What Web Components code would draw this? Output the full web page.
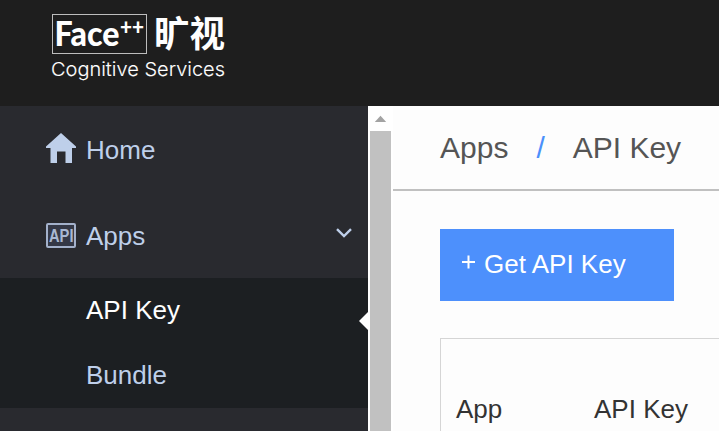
<!DOCTYPE html>
<html lang="en"><head><meta charset="utf-8"><title>Face++ Console</title>
<style>html,body{margin:0;height:100%;overflow:hidden;font-family:"Liberation Sans",Arial,sans-serif;background:#fdfdfd}</style></head>
<body><console-app></console-app>
<script>
const define=(name,html)=>customElements.define(name,class extends HTMLElement{
  constructor(){super();const t=document.createElement('template');t.innerHTML=html;
    this.attachShadow({mode:'open'}).append(t.content.cloneNode(true));}
});
define('brand-logo',`<style>:host{display:block;height:106px;background:#1e1e1e}svg{display:block}</style>
<svg width="240" height="106" fill="#fff">
<rect x="52.5" y="14.5" width="94" height="39" fill="none" stroke="#bdbdbd"/>
<text x="54.5" y="46" font-family="Lato, sans-serif" font-weight="900" font-size="34" textLength="65" lengthAdjust="spacingAndGlyphs">Face</text>
<text x="120" y="34.6" font-family="Lato, sans-serif" font-weight="900" font-size="22" textLength="24" lengthAdjust="spacingAndGlyphs">++</text>
<text x="154" y="47" font-family="Noto Sans CJK SC, sans-serif" font-weight="700" font-size="36" textLength="71" lengthAdjust="spacingAndGlyphs">旷视</text>
<text x="51" y="76" font-family="Inter, sans-serif" font-weight="300" font-size="19" stroke="#fff" stroke-width=".1" textLength="174" lengthAdjust="spacingAndGlyphs">Cognitive Services</text>
</svg>`);
define('home-icon',`<style>:host,svg{display:block}</style><svg width="30" height="32" fill="#becfea"><path d="M15 1 L30 14.5 V16 H26 V31 H19.5 V19.5 H11 V31 H4.5 V16 H0 V14.5Z"/></svg>`);
define('api-icon',`<style>:host,svg{display:block;overflow:visible}</style><svg width="30" height="26"><rect x="1" y="1" width="28" height="23" rx="1" fill="#343846" stroke="#a3b1cb" stroke-width="2"/><text x="3" y="18.7" fill="#a9b8d3" font-family="Liberation Sans, sans-serif" font-weight="700" font-size="17.5" textLength="24.5" lengthAdjust="spacingAndGlyphs">API</text></svg>`);
define('chevron-icon',`<style>:host,svg{display:block}</style><svg width="16" height="10" fill="none" stroke="#becfea" stroke-width="2.4"><path d="M1 1.2 L8 8 L15 1.2"/></svg>`);
define('nav-item',`<style>:host{display:flex;align-items:center;box-sizing:border-box;height:88px;padding:0 16px 0 46px;font-size:26px;color:#becfea}
.i{width:30px;margin-right:10px}.t{flex:1}</style><div class="i"><slot name="icon"></slot></div><div class="t"><slot></slot></div><slot name="end"></slot>`);
define('sub-item',`<style>:host{display:block;position:relative;height:65px;line-height:65px;padding-left:86px;font-size:26px;color:#becfea}
:host([active]){color:#fff}i{display:none}:host([active]) i{display:block;position:absolute;right:0;top:34px;border:9px solid transparent;border-left:0;border-right-color:#fff}</style><slot></slot><i></i>`);
define('side-nav',`<style>:host{display:block;width:368px;background:#292a2f}.sub{background:#1c1f22}
.apps{height:84px;margin-top:0}home-icon{margin-bottom:4px}chevron-icon{margin-bottom:6px}</style>
<nav-item><home-icon slot="icon"></home-icon>Home</nav-item>
<nav-item class="apps"><api-icon slot="icon"></api-icon>Apps<chevron-icon slot="end"></chevron-icon></nav-item>
<div class="sub"><sub-item active>API Key</sub-item><sub-item>Bundle</sub-item></div>`);
define('scroll-rail',`<style>:host{display:flex;flex-direction:column;width:21px;padding:0 2px;background:#fff}svg{display:block;height:25px;flex:none}.thumb{flex:1;background:#c1c1c1}</style>
<svg width="21" height="25" fill="#a3a3a3"><path d="M10.5 9.8 L16.2 16 H4.8Z"/></svg><div class="thumb"></div>`);
define('bread-crumb',`<style>:host{display:flex;box-sizing:border-box;height:85px;padding-left:47px;border-bottom:2px solid #c0c0c0;font-size:30px;line-height:83px;color:#555}
.s{color:#4b90fb;margin:0 28px}</style><span>Apps</span><span class="s">/</span><span>API Key</span>`);
define('primary-button',`<style>:host{display:flex;box-sizing:border-box;width:234px;height:72px;padding-left:21px;background:#4d90fc;color:#fff;font-size:26px;line-height:71px;white-space:nowrap}
svg{flex:none;margin:26px 9px 0 0}</style><svg width="14" height="14" stroke="#fff" stroke-width="2"><path d="M1 7H14M7.5 0.5V13.5"/></svg><slot></slot>`);
define('key-table',`<style>:host{display:grid;grid-template-columns:138px 1fr;box-sizing:border-box;height:200px;padding:0 0 0 15px;border:1px solid #d5d5d5;border-right:0;color:#333;font-size:26px;line-height:140px}</style><span>App</span><span>API Key</span>`);
define('console-app',`<style>:host{display:flex;flex-direction:column;width:719px;height:431px;overflow:hidden}
.body{flex:1;min-height:0;display:flex}side-nav,scroll-rail{flex:none}main{flex:1;min-width:0}.c{padding:38px 0 0 47px}key-table{margin-top:37px}</style>
<brand-logo></brand-logo><div class="body"><side-nav></side-nav><scroll-rail></scroll-rail><main><bread-crumb></bread-crumb><div class="c"><primary-button>Get API Key</primary-button><key-table></key-table></div></main></div>`);
</script></body></html>
